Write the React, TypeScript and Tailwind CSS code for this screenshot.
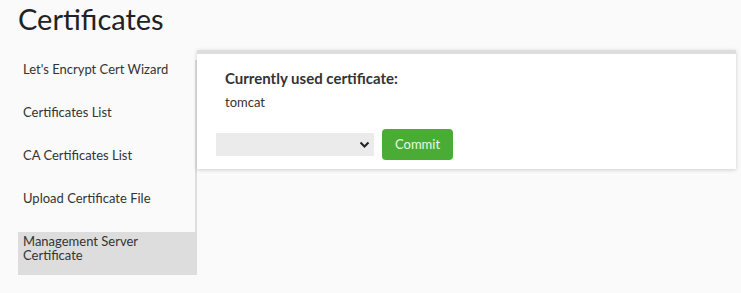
import React from "react";

const items = [
  "Let's Encrypt Cert Wizard",
  "Certificates List",
  "CA Certificates List",
  "Upload Certificate File",
  "Management Server Certificate",
];

export default function App() {
  return (
    <div className="w-[741px] h-[293px] overflow-hidden bg-[#fafafa] text-[#333] font-['Lato','Noto_Sans',sans-serif]">
      <h1 className="pl-[18px] pt-[1px] text-[29px] leading-[35px] text-[#222] font-normal">Certificates</h1>
      <div className="flex mt-[14px]">
        <div className="ml-[18px] w-[179px] pt-[10px] flex flex-col">
          <div className="border-r-2 border-[#dddddd] flex flex-col">
            {items.map((t, i) => {
              const sel = i === items.length - 1;
              return (
                <div
                  key={t}
                  className={
                    "h-[43px] pl-[5px] pr-[10px] pt-[2px] text-[13px] leading-[14px] " +
                    (sel ? "bg-[#dddddd] text-[#333]" : "text-[#333]")
                  }
                >
                  {t}
                </div>
              );
            })}
          </div>
        </div>
        <div className="w-[539px] h-[119px] bg-white border-t-4 border-[#dddddd] shadow-[0_1px_4px_rgba(0,0,0,0.18)]">
          <div className="pl-[28px] pt-[15px] text-[15px] leading-[18px] font-bold text-[#333]">
            Currently used certificate:
          </div>
          <div className="pl-[28px] mt-[7px] text-[13px] leading-[16px] text-[#333]">tomcat</div>
          <div className="flex items-center gap-[8px] pl-[19px] mt-[19px]">
            <div className="relative w-[158px] h-[23px]">
              <select className="block appearance-none w-full h-full bg-[#ebebeb] outline-none border-0 text-[13px]">
                <option value=""></option>
              </select>
              <svg
                className="absolute right-[4px] top-[7px] pointer-events-none"
                width="11"
                height="9"
                viewBox="0 0 11 9"
              >
                <path d="M1.5 2.5 L5.5 6.5 L9.5 2.5" stroke="#222" strokeWidth="2" fill="none" />
              </svg>
            </div>
            <button className="w-[71px] h-[31px] rounded-[4px] bg-[#4aac34] text-[#eaf6e6] text-[13px]">
              Commit
            </button>
          </div>
        </div>
      </div>
    </div>
  );
}
